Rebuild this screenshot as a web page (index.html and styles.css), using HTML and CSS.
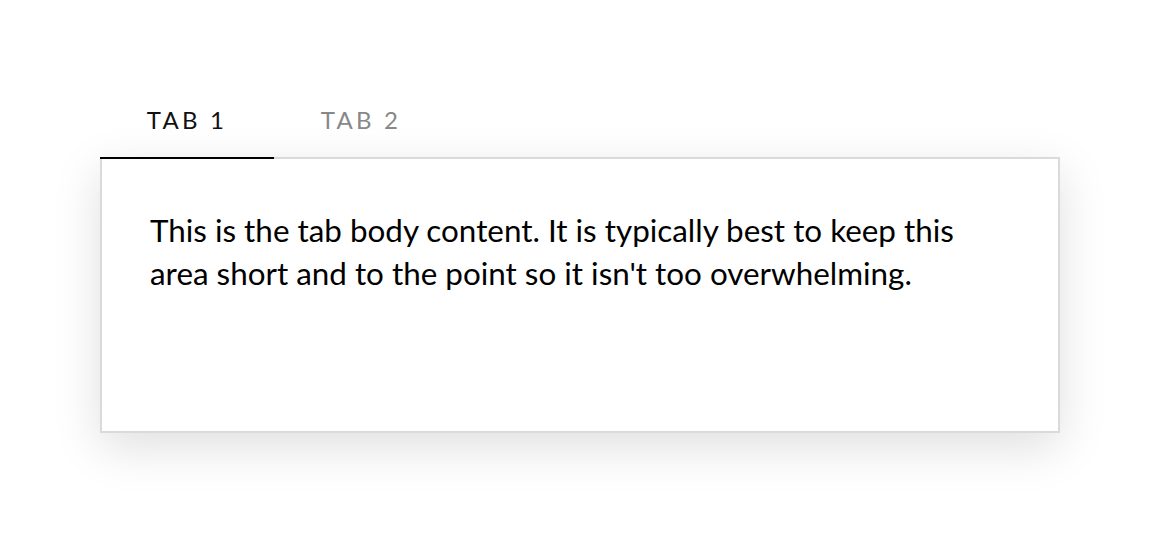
FILE: index.html
```html
<!DOCTYPE html>
<html lang="en">
<head>
  <meta charset="UTF-8" />
  <meta name="viewport" content="width=device-width, initial-scale=1.0"/>
  <title>Tabs</title>
  <link rel="stylesheet" href="styles.css">
</head>
<body>

  <!-- Tabs -->
  <div class="tabs">
    <div class="tab-list">
      <div class="tab active">TAB 1</div>
      <div class="tab">TAB 2</div>
    </div>
    <div class="tab-body">
      <p>This is the tab body content. It is typically best to keep this area short and to the point so it isn't too overwhelming.</p>
    </div>
  </div>

</body>
</html>
```

FILE: styles.css
```css
html, body {
  min-height: 100%;
}

body {
  margin: 0;
  padding: 95px 100px 100px;
  background: #fff;
  font-family: Lato, "Liberation Sans", sans-serif;
  color: #000;
}

.tabs {
  width: 960px;
}

.tab-list {
  display: flex;
  position: relative;
  z-index: 2;
}

.tab {
  width: 174px;
  box-sizing: border-box;
  padding: 12px 0 24px;
  text-align: center;
  font-size: 24px;
  line-height: 26px;
  letter-spacing: 3.2px;
  color: #888;
  border-bottom: 2px solid transparent;
  margin-bottom: -2px;
}

.tab.active {
  color: #111;
  border-bottom-color: #000;
}

.tab-body {
  height: 276px;
  border: 2px solid #dadada;
  background: #fff;
  padding: 50px 48px;
  box-sizing: border-box;
  box-shadow: 0 14px 45px rgba(0, 0, 0, 0.13);
}

.tab-body p {
  margin: 0;
  font-size: 31.4px;
  line-height: 43px;
  max-width: 830px;
}
```
